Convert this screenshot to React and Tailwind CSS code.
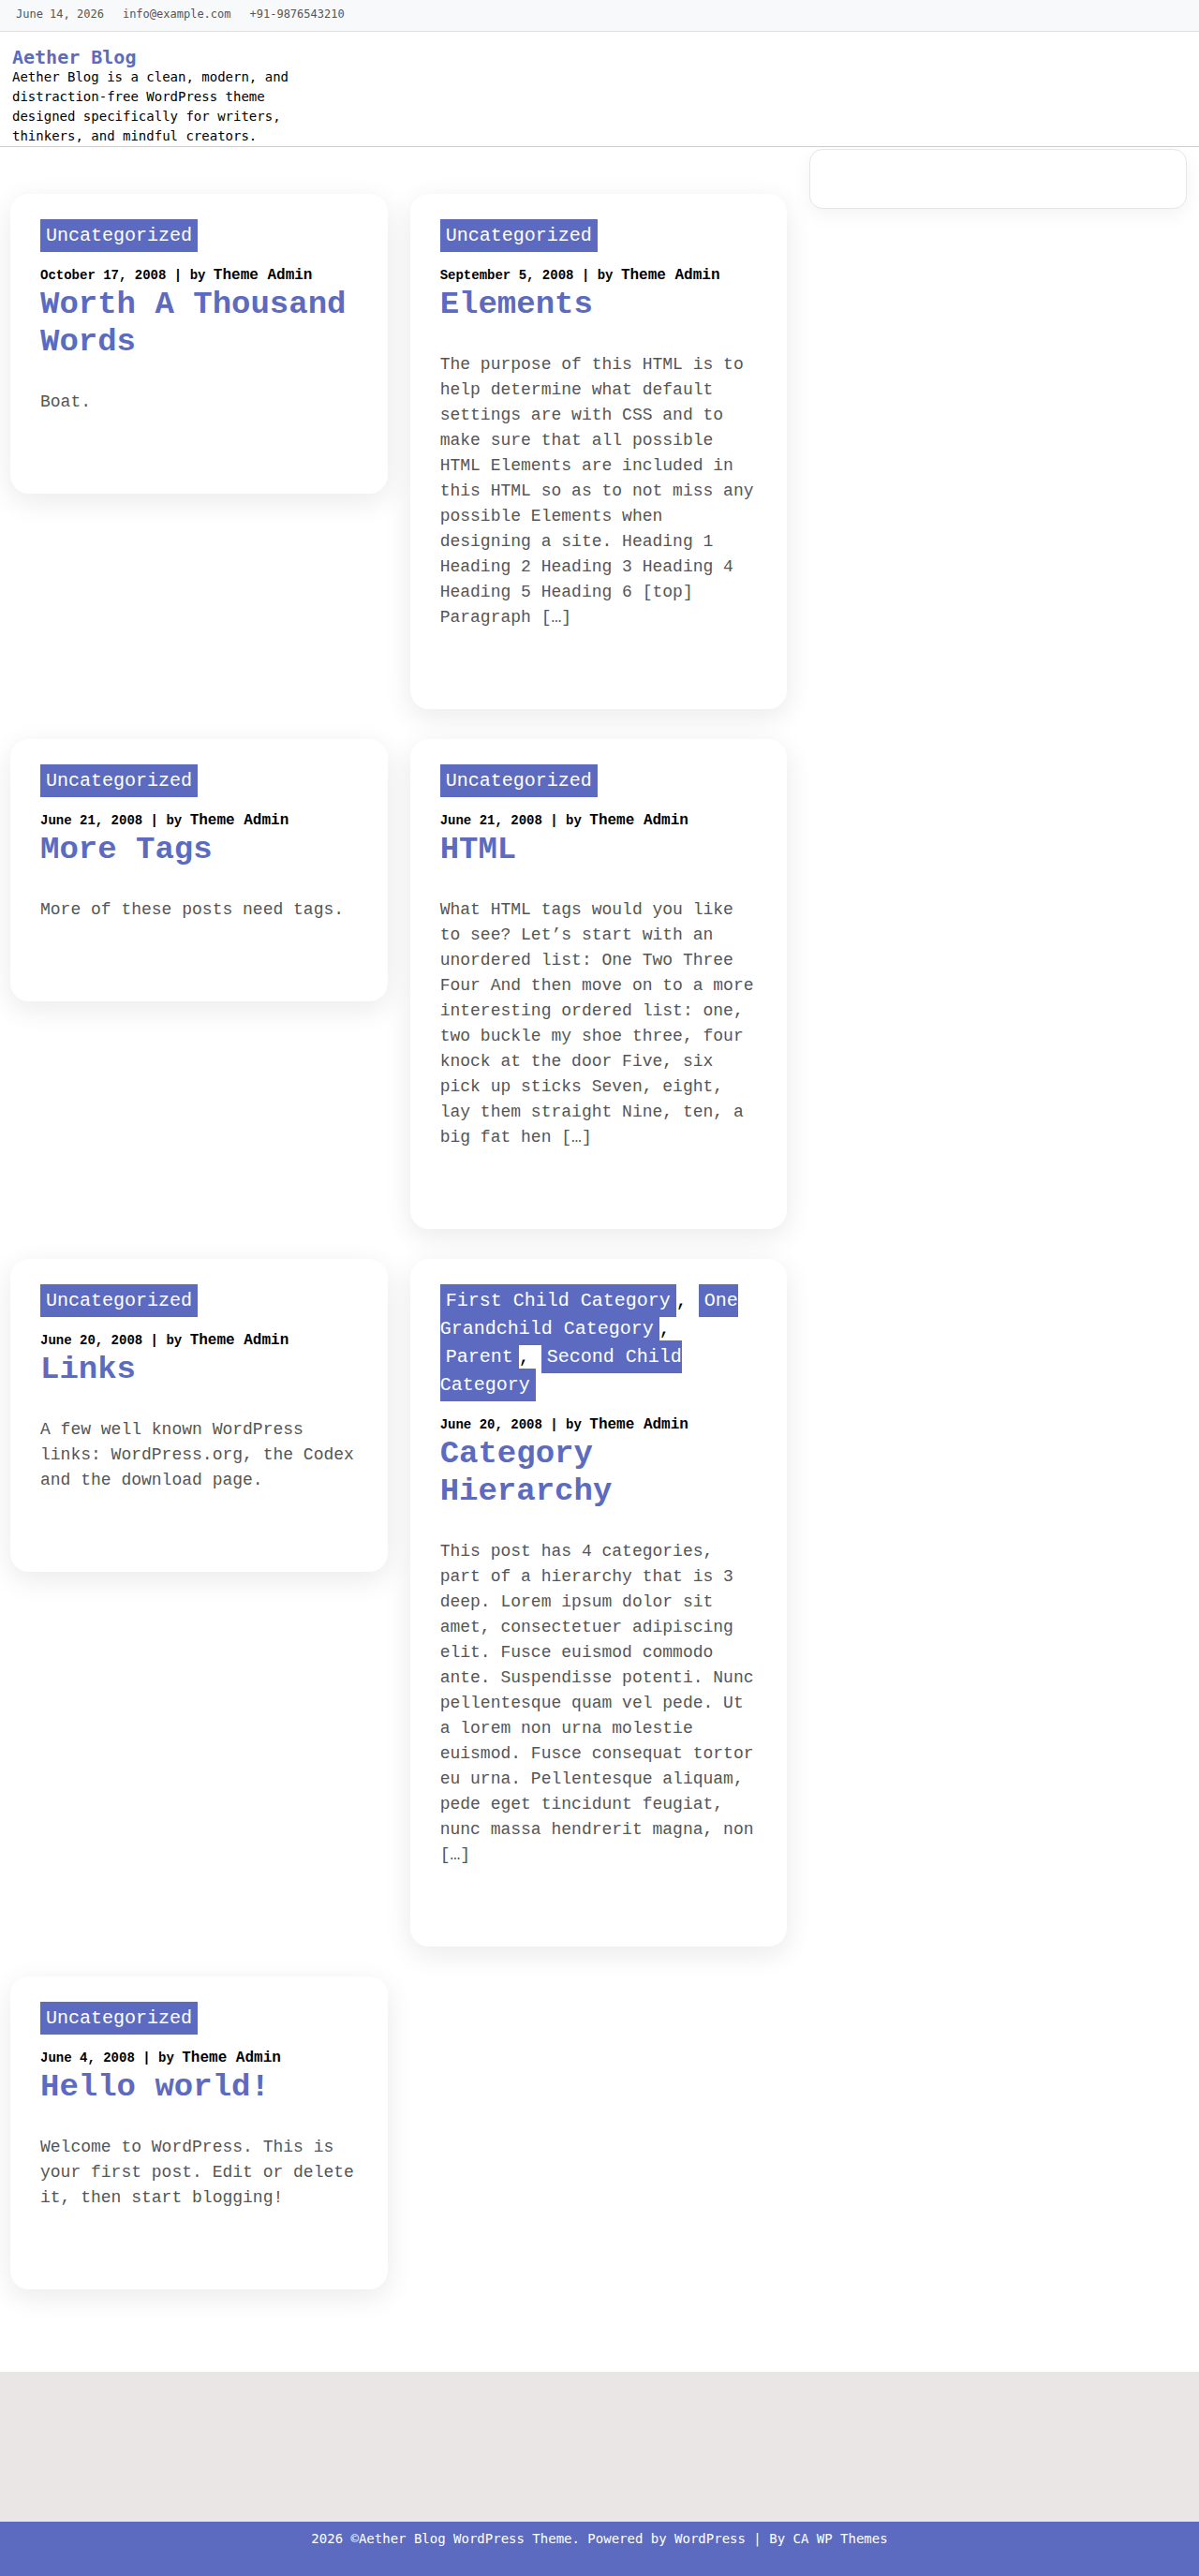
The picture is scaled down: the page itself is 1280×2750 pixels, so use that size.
const posts = [
  {
    cats: ['Uncategorized'],
    date: 'October 17, 2008',
    title: 'Worth A Thousand Words',
    excerpt: 'Boat.',
  },
  {
    cats: ['Uncategorized'],
    date: 'September 5, 2008',
    title: 'Elements',
    excerpt:
      'The purpose of this HTML is to help determine what default settings are with CSS and to make sure that all possible HTML Elements are included in this HTML so as to not miss any possible Elements when designing a site. Heading 1 Heading 2 Heading 3 Heading 4 Heading 5 Heading 6 [top] Paragraph […]',
  },
  {
    cats: ['Uncategorized'],
    date: 'June 21, 2008',
    title: 'More Tags',
    excerpt: 'More of these posts need tags.',
  },
  {
    cats: ['Uncategorized'],
    date: 'June 21, 2008',
    title: 'HTML',
    excerpt:
      'What HTML tags would you like to see? Let’s start with an unordered list: One Two Three Four And then move on to a more interesting ordered list: one, two buckle my shoe three, four knock at the door Five, six pick up sticks Seven, eight, lay them straight Nine, ten, a big fat hen […]',
  },
  {
    cats: ['Uncategorized'],
    date: 'June 20, 2008',
    title: 'Links',
    excerpt: 'A few well known WordPress links: WordPress.org, the Codex and the download page.',
  },
  {
    cats: ['First Child Category', 'One Grandchild Category', 'Parent', 'Second Child Category'],
    date: 'June 20, 2008',
    title: 'Category Hierarchy',
    excerpt:
      'This post has 4 categories, part of a hierarchy that is 3 deep. Lorem ipsum dolor sit amet, consectetuer adipiscing elit. Fusce euismod commodo ante. Suspendisse potenti. Nunc pellentesque quam vel pede. Ut a lorem non urna molestie euismod. Fusce consequat tortor eu urna. Pellentesque aliquam, pede eget tincidunt feugiat, nunc massa hendrerit magna, non […]',
  },
  {
    cats: ['Uncategorized'],
    date: 'June 4, 2008',
    title: 'Hello world!',
    excerpt: 'Welcome to WordPress. This is your first post. Edit or delete it, then start blogging!',
  },
];

const PostCard = ({ post }) => (
  <article className="bg-white rounded-[20px] shadow-[0_8px_30px_rgba(20,20,40,0.09)] px-8 pt-[30px] pb-[84px]">
    <div className="text-[20px] leading-[30px] text-black">
      {post.cats.map((cat, i) => (
        <span key={cat}>
          {i > 0 && ', '}
          <a className="bg-[#5c6bc0] text-white px-[6px] py-[6px]">{cat}</a>
        </span>
      ))}
    </div>
    <div className="mt-4 leading-[22px] font-bold text-black">
      <span className="text-[14px]">{post.date} | by </span>
      <a className="text-[16px]">Theme Admin</a>
    </div>
    <h2 className="text-[34px] leading-[40px] font-bold text-[#5c6bc0]">{post.title}</h2>
    <p className="mt-[31px] text-[18px] leading-[27px] text-[#555555]">{post.excerpt}</p>
  </article>
);

export default function App() {
  return (
    <div className="bg-white min-h-screen">
      {/* Top bar */}
      <div className="h-[34px] bg-[#f8f9fa] border-b border-[#dee2e6] flex items-center gap-5 pl-[17px] pb-[4px] text-[12px] text-[#555] font-['DejaVu_Sans_Mono',monospace]">
        <span>June 14, 2026</span>
        <span>info@example.com</span>
        <span>+91-9876543210</span>
      </div>

      {/* Header */}
      <header className="border-b border-[#cfcfcf] pl-[13px] pt-[16px] font-['DejaVu_Sans_Mono',monospace]">
        <h1 className="text-[20px] leading-[22px] font-bold text-[#5c6bc0]">Aether Blog</h1>
        <p className="w-[320px] text-[14px] leading-[21px] text-black">
          Aether Blog is a clean, modern, and distraction-free WordPress theme designed specifically for writers, thinkers, and mindful creators.
        </p>
      </header>

      {/* Content */}
      <div className="grid grid-cols-3 gap-x-6 pl-[11px] pr-[13px] font-['Liberation_Mono',monospace]">
        <main className="col-span-2 pt-[50px] pb-[88px]">
          <div className="grid grid-cols-2 gap-x-6 gap-y-8 items-start">
            {posts.map((post) => (
              <PostCard key={post.title} post={post} />
            ))}
          </div>
        </main>
        <aside className="pt-[2px]">
          <div className="h-16 bg-white border border-[#e6e6e6] rounded-[14px] shadow-[0_6px_20px_rgba(0,0,0,0.05)]" />
        </aside>
      </div>

      {/* Footer widgets */}
      <div className="h-[160px] bg-[#e9e6e5]" />

      {/* Footer */}
      <footer className="bg-[#5c6bc0] pt-2 pb-[29px] text-center text-[14px] leading-[21px] text-white font-['DejaVu_Sans_Mono',monospace]">
        2026 ©Aether Blog WordPress Theme. Powered by WordPress | By CA WP Themes
      </footer>
    </div>
  );
}
